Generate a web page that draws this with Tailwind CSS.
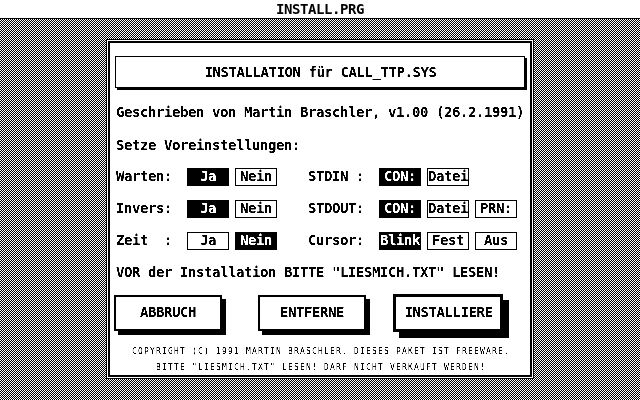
<!DOCTYPE html>
<html lang="de">
<head>
    <meta charset="UTF-8">
    <title>INSTALL.PRG</title>
    <script src="https://cdn.jsdelivr.net/npm/@tailwindcss/browser@4"></script>
</head>
<body class="bg-white text-black font-['DejaVu_Sans_Mono',monospace] font-bold text-[14px] tracking-[-0.43px] leading-4 whitespace-nowrap">
    <div class="w-[640px] h-[400px] overflow-hidden flex flex-col contrast-[4]">
        <!-- Titelzeile -->
        <div class="h-[19px] shrink-0 border-b border-black flex items-center justify-center">INSTALL.PRG</div>

        <!-- Desktop -->
        <div class="relative flex-1 pt-[20px] pl-[106px]">
            <svg class="absolute inset-0" width="640" height="381" shape-rendering="crispEdges">
                <defs>
                    <pattern id="raster" width="2" height="2" patternUnits="userSpaceOnUse">
                        <rect width="2" height="2" fill="#fff"/>
                        <rect width="1" height="1" fill="#000"/>
                        <rect x="1" y="1" width="1" height="1" fill="#000"/>
                    </pattern>
                </defs>
                <rect width="640" height="381" fill="url(#raster)"/>
            </svg>
            <div class="relative w-[428px] h-[340px] border border-black bg-white p-px">
                <div class="h-full border-2 border-black pl-[5px] pt-[13px] flex flex-col">

                    <div class="w-[410px] h-[32px] shrink-0 border border-black shadow-[2px_2px_0_#000] flex items-center justify-center pl-px">INSTALLATION für CALL_TTP.SYS</div>

                    <div class="mt-[16px] pl-px">Geschrieben von Martin Braschler, v1.00 (26.2.1991)</div>
                    <div class="mt-[17px] pl-px">Setze Voreinstellungen:</div>

                    <!-- Optionen -->
                    <div class="mt-[15px] flex flex-col gap-[14px] pl-px">
                        <div class="flex h-[18px] items-center">
                            <span class="w-[71px] pb-[2px]">Warten:</span>
                            <div class="w-[42px] h-[18px] pb-[2px] bg-black text-white flex items-center justify-center">Ja</div>
                            <div class="ml-[6px] w-[42px] h-[18px] pb-[2px] border border-black flex items-center justify-center">Nein</div>
                            <span class="ml-[31px] w-[71px] pb-[2px]">STDIN :</span>
                            <div class="w-[42px] h-[18px] pb-[2px] bg-black text-white flex items-center justify-center">CON:</div>
                            <div class="ml-[6px] w-[42px] h-[18px] pb-[2px] border border-black flex items-center justify-center">Datei</div>
                        </div>
                        <div class="flex h-[18px] items-center">
                            <span class="w-[71px] pb-[2px]">Invers:</span>
                            <div class="w-[42px] h-[18px] pb-[2px] bg-black text-white flex items-center justify-center">Ja</div>
                            <div class="ml-[6px] w-[42px] h-[18px] pb-[2px] border border-black flex items-center justify-center">Nein</div>
                            <span class="ml-[31px] w-[71px] pb-[2px]">STDOUT:</span>
                            <div class="w-[42px] h-[18px] pb-[2px] bg-black text-white flex items-center justify-center">CON:</div>
                            <div class="ml-[6px] w-[42px] h-[18px] pb-[2px] border border-black flex items-center justify-center">Datei</div>
                            <div class="ml-[6px] w-[42px] h-[18px] pb-[2px] border border-black flex items-center justify-center">PRN:</div>
                        </div>
                        <div class="flex h-[18px] items-center">
                            <span class="w-[71px] pb-[2px] whitespace-pre">Zeit  :</span>
                            <div class="w-[42px] h-[18px] pb-[2px] border border-black flex items-center justify-center">Ja</div>
                            <div class="ml-[6px] w-[42px] h-[18px] pb-[2px] bg-black text-white flex items-center justify-center">Nein</div>
                            <span class="ml-[31px] w-[71px] pb-[2px]">Cursor:</span>
                            <div class="w-[42px] h-[18px] pb-[2px] bg-black text-white flex items-center justify-center">Blink</div>
                            <div class="ml-[6px] w-[42px] h-[18px] pb-[2px] border border-black flex items-center justify-center">Fest</div>
                            <div class="ml-[6px] w-[42px] h-[18px] pb-[2px] border border-black flex items-center justify-center">Aus</div>
                        </div>
                    </div>

                    <div class="mt-[14px] pl-px">VOR der Installation BITTE "LIESMICH.TXT" LESEN!</div>

                    <!-- Buttons -->
                    <div class="mt-[14px] -ml-px flex items-start h-[44px]">
                        <div class="mt-px w-[108px] h-[36px] pb-[2px] border-2 border-black shadow-[4px_4px_0_#000] flex items-center justify-center">ABBRUCH</div>
                        <div class="mt-px ml-[36px] w-[108px] h-[36px] pb-[2px] border-2 border-black shadow-[4px_4px_0_#000] flex items-center justify-center">ENTFERNE</div>
                        <div class="ml-[27px] w-[110px] h-[38px] pb-[2px] border-[3px] border-black shadow-[6px_6px_0_#000] flex items-center justify-center pl-px">INSTALLIERE</div>
                    </div>

                    <!-- Kleingedrucktes -->
                    <div class="mt-[8px] flex flex-col gap-[2px] items-center w-[410px] pl-[2px] font-normal text-[8px] leading-[14px] tracking-[1.18px]">
                        <div>COPYRIGHT (C) 1991 MARTIN BRASCHLER. DIESES PAKET IST FREEWARE.</div>
                        <div>BITTE "LIESMICH.TXT" LESEN! DARF NICHT VERKAUFT WERDEN!</div>
                    </div>
                </div>
            </div>
        </div>
    </div>
</body>
</html>
